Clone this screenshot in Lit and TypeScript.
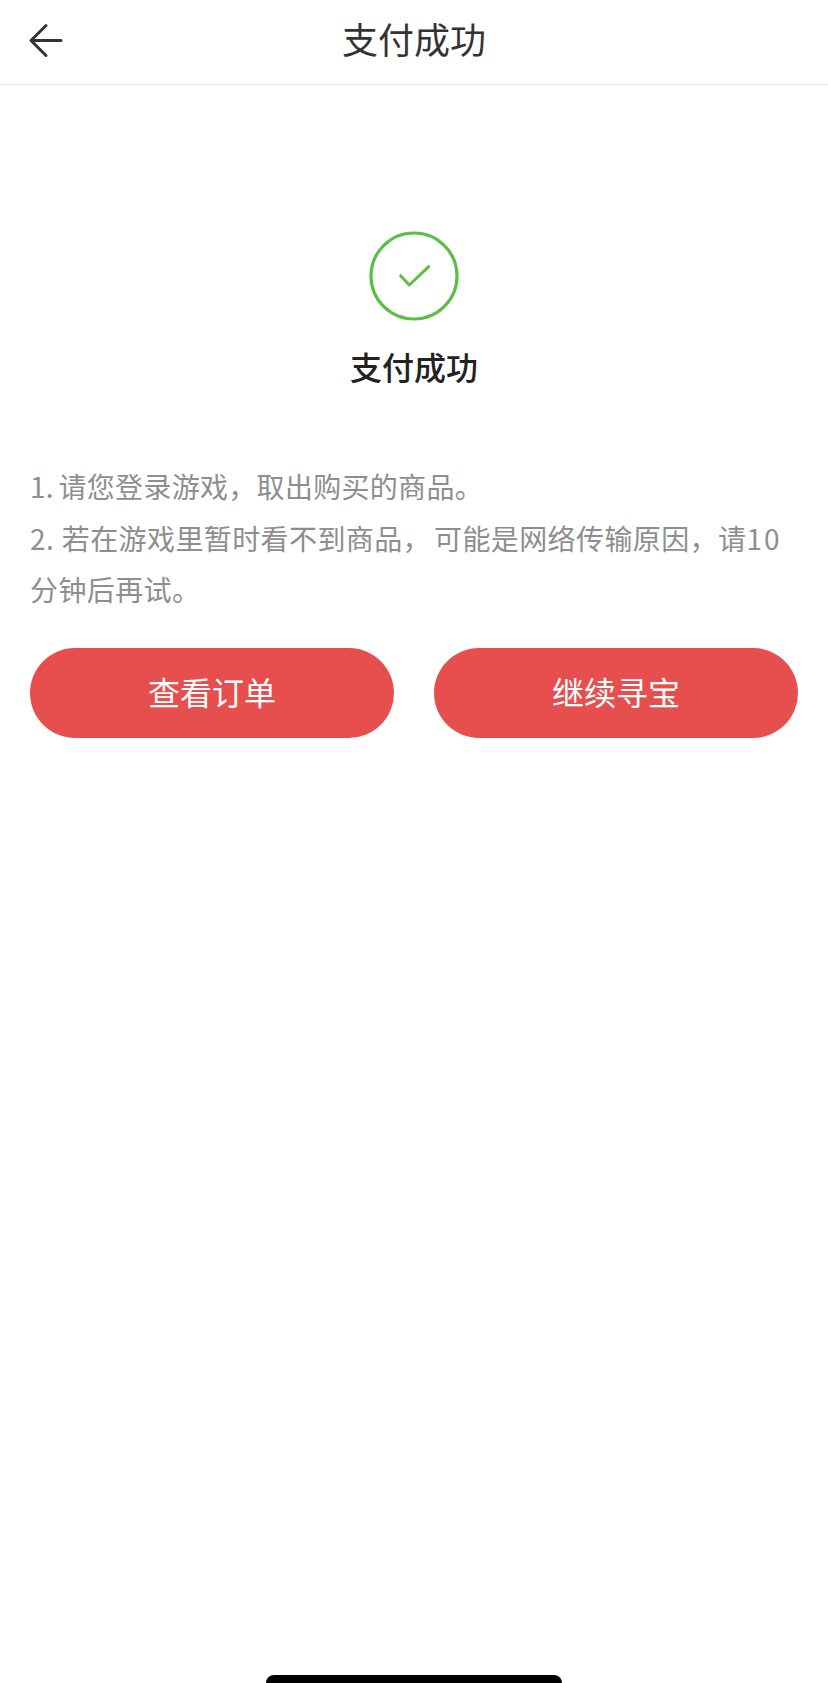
import { LitElement, html, css } from 'lit';
import { customElement } from 'lit/decorators.js';

@customElement('app-root')
export class AppRoot extends LitElement {
  static styles = css`
    :host {
      display: flex;
      flex-direction: column;
      min-height: 1683px;
      background: #fff;
      font-family: 'Noto Sans CJK SC', 'Liberation Sans', sans-serif;
    }

    .nav {
      display: flex;
      align-items: center;
      justify-content: center;
      position: relative;
      height: 85px;
      box-sizing: border-box;
      padding-bottom: 8px;
      border-bottom: 1px solid #e6e6e6;
      color: #333;
      font-size: 36px;
    }

    .back {
      position: absolute;
      left: 28px;
      top: 22px;
      width: 36px;
      height: 36px;
    }

    .result {
      display: flex;
      flex-direction: column;
      align-items: center;
      padding-top: 146px;
    }

    .result svg {
      width: 90px;
      height: 90px;
    }

    .result h1 {
      margin: 22px 0 0;
      color: #222;
      font-size: 32px;
      font-weight: 500;
      line-height: 46px;
    }

    .notes {
      margin: 72px 30px 0;
      color: #8e8e8e;
      font-size: 28px;
      line-height: 51.5px;
    }

    .notes p {
      margin: 0;
      letter-spacing: 0.3px;
      word-spacing: -2px;
    }

    .notes p.long {
      letter-spacing: 0.4px;
      word-spacing: 0;
    }

    .marker {
      margin-right: 1px;
    }

    .comma {
      margin-right: 3px;
    }

    .num {
      letter-spacing: 2px;
    }

    .actions {
      display: flex;
      justify-content: space-between;
      margin: 32px 30px 0;
    }

    .actions button {
      width: 364px;
      height: 90px;
      border: 0;
      border-radius: 45px;
      background: #e74f4f;
      color: #fff;
      font: inherit;
      font-size: 32px;
      padding: 0 0 4px;
    }

    .home {
      width: 296px;
      height: 8px;
      margin: auto auto 0;
      border-radius: 8px 8px 0 0;
      background: #000;
    }
  `;

  render() {
    return html`
      <header class="nav">
        <svg class="back" viewBox="0 0 36 36" fill="none" stroke="#333" stroke-width="3" stroke-linecap="round" stroke-linejoin="round">
          <path d="M33 18.5H3.5M18 3.5L3 18.5L18 33.5" />
        </svg>
        支付成功
      </header>
      <section class="result">
        <svg viewBox="0 0 90 90" fill="none" stroke="#5cbf45" stroke-width="3.2">
          <circle cx="45" cy="45" r="43" />
          <path d="M31.7 44.7L40.3 54L59.7 35.7" stroke-width="3" stroke-linecap="round" stroke-linejoin="round" />
        </svg>
        <h1>支付成功</h1>
      </section>
      <div class="notes">
        <p>1. 请您登录游戏，取出购买的商品。</p>
        <p class="long"><span class="marker">2.</span> 若在游戏里暂时看不到商品<span class="comma">，</span>可能是网络传输原因，请<span class="num">10</span>分钟后再试。</p>
      </div>
      <div class="actions">
        <button>查看订单</button>
        <button>继续寻宝</button>
      </div>
      <div class="home"></div>
    `;
  }
}
